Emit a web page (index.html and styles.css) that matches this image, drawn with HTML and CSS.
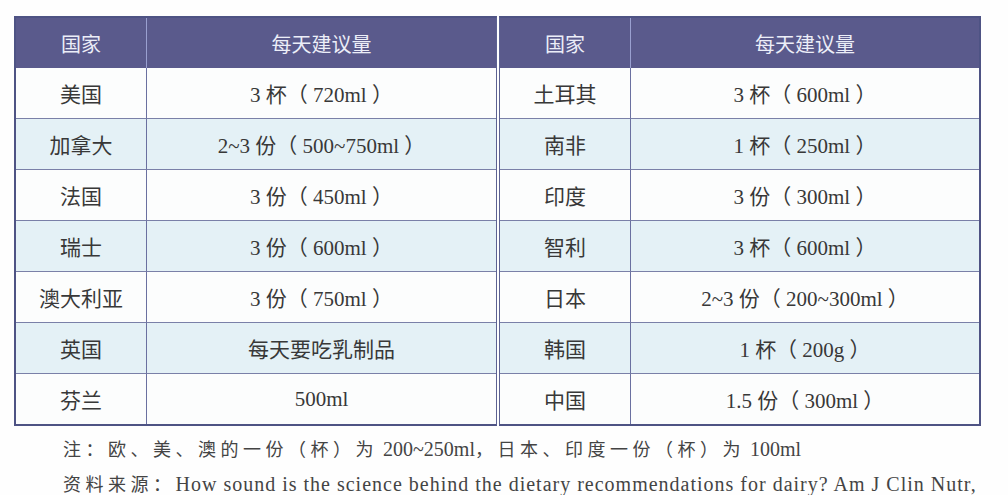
FILE: index.html
```html
<!DOCTYPE html>
<html lang="zh">
<head>
<meta charset="utf-8">
<title>每天建议量</title>
<link rel="stylesheet" href="styles.css">
</head>
<body>
<div class="page">
  <div class="tables">
    <div class="half left">
      <div class="th">国家</div><div class="th">每天建议量</div>
      <div class="td">美国</div><div class="td">3 杯（ 720ml ）</div>
      <div class="td alt">加拿大</div><div class="td alt">2~3 份（ 500~750ml ）</div>
      <div class="td">法国</div><div class="td">3 份（ 450ml ）</div>
      <div class="td alt">瑞士</div><div class="td alt">3 份（ 600ml ）</div>
      <div class="td">澳大利亚</div><div class="td">3 份（ 750ml ）</div>
      <div class="td alt">英国</div><div class="td alt">每天要吃乳制品</div>
      <div class="td">芬兰</div><div class="td">500ml</div>
    </div>
    <div class="half right">
      <div class="th">国家</div><div class="th">每天建议量</div>
      <div class="td">土耳其</div><div class="td">3 杯（ 600ml ）</div>
      <div class="td alt">南非</div><div class="td alt">1 杯（ 250ml ）</div>
      <div class="td">印度</div><div class="td">3 份（ 300ml ）</div>
      <div class="td alt">智利</div><div class="td alt">3 杯（ 600ml ）</div>
      <div class="td">日本</div><div class="td">2~3 份（ 200~300ml ）</div>
      <div class="td alt">韩国</div><div class="td alt">1 杯（ 200g ）</div>
      <div class="td">中国</div><div class="td">1.5 份（ 300ml ）</div>
    </div>
  </div>
  <div class="notes">
    <p class="note"><span class="cn">注：欧、美、澳的一份（杯）为</span> 200~250ml<span class="cn">，日本、印度一份（杯）为</span> 100ml</p>
    <p class="note"><span class="cn">资料来源：</span><span class="en">How sound is the science behind the dietary recommendations for dairy? Am J Clin Nutr,</span></p>
  </div>
</div>
</body>
</html>
```
FILE: styles.css
```css
html, body {
  margin: 0;
  padding: 0;
  background: #fefefe;
}
.page {
  padding: 16px 0 0 14px;
  width: 994px;
  font-family: "Liberation Serif", "Noto Sans CJK SC", serif;
  color: #383838;
}
.tables {
  display: flex;
  gap: 2px;
}
.half {
  display: grid;
  grid-template-rows: 50px repeat(6, 51px) 50px;
  border-top: 2px solid #4e5384;
  border-bottom: 2px solid #4e5384;
  box-sizing: border-box;
}
.left {
  width: 483px;
  grid-template-columns: 131px 1fr;
  border-left: 2px solid #4e5384;
  border-right: 1px solid #5c6292;
}
.right {
  width: 482px;
  grid-template-columns: 131px 1fr;
  border-left: 1px solid #5c6292;
  border-right: 2px solid #4e5384;
}
.th, .td {
  display: flex;
  align-items: center;
  justify-content: center;
  box-sizing: border-box;
  border-bottom: 1px solid #7a80a8;
}
.th:nth-child(odd), .td:nth-child(odd) {
  border-right: 1px solid #6a70a0;
}
.th {
  background: #5a5a8c;
  color: #eceef8;
  font-family: "Noto Sans CJK SC", sans-serif;
  font-size: 20px;
  border-bottom: none;
}
.th:nth-child(odd) {
  border-right-color: #9aa0d0;
}
.td {
  background: #fcfdfd;
  font-size: 21px;
  white-space: pre;
}
.td.alt {
  background: #e4f1f6;
}
.td:nth-last-child(-n+2) {
  border-bottom: none;
}
.notes {
  padding: 5px 0 0 49px;
}
.note {
  margin: 0;
  font-size: 20px;
  line-height: 34px;
  white-space: nowrap;
  color: #444;
}
.cn {
  font-family: "Noto Sans CJK SC", sans-serif;
  font-size: 18px;
  letter-spacing: 4.5px;
}
.en {
  letter-spacing: 1px;
}
```
